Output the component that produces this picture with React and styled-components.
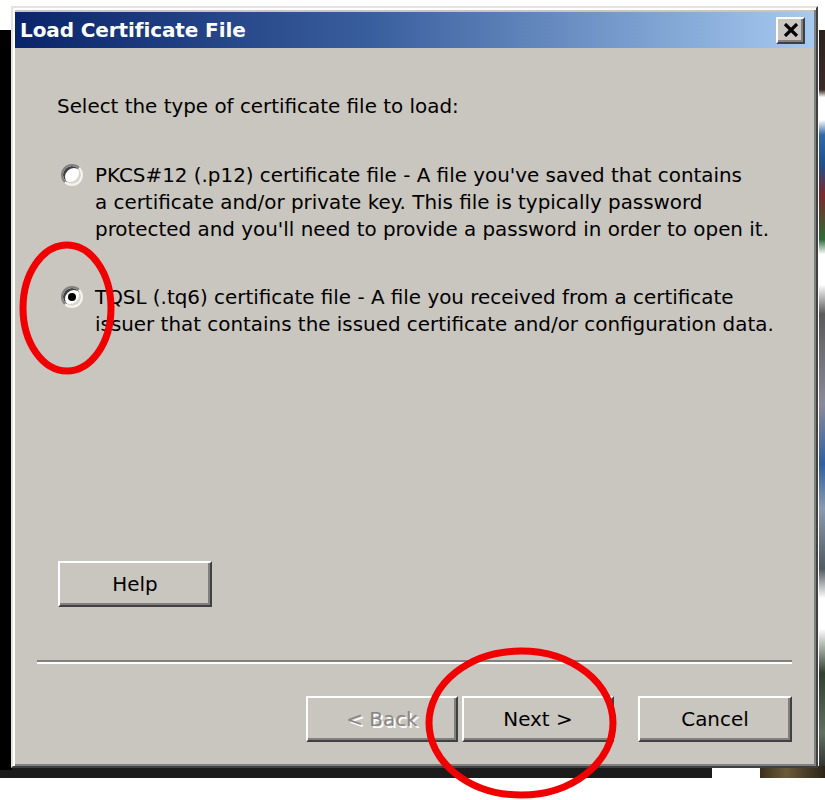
import React, { useState } from 'react'
import styled, { createGlobalStyle } from 'styled-components'

const GlobalStyle = createGlobalStyle`
  html, body { margin: 0; padding: 0; background: #fff; }
  body { font-family: "DejaVu Sans", "Liberation Sans", sans-serif; }
`

const options = [
  {
    id: 'p12',
    lines: [
      "PKCS#12 (.p12) certificate file - A file you've saved that contains",
      'a certificate and/or private key. This file is typically password',
      "protected and you'll need to provide a password in order to open it.",
    ],
  },
  {
    id: 'tq6',
    lines: [
      'TQSL (.tq6) certificate file - A file you received from a certificate',
      'issuer that contains the issued certificate and/or configuration data.',
    ],
  },
]

function App() {
  const [selected, setSelected] = useState('tq6')
  return (
    <Screen>
      <GlobalStyle />
      <Dialog>
        <TitleBar>
          <Title>Load Certificate File</Title>
          <CloseButton aria-label="Close">
            <svg width="16" height="14" viewBox="0 0 16 14">
              <path d="M2 1 L14 13 M14 1 L2 13" stroke="#000" strokeWidth="3.2" />
            </svg>
          </CloseButton>
        </TitleBar>
        <Body>
          <Prompt>Select the type of certificate file to load:</Prompt>
          {options.map((o, i) => (
            <Option key={o.id} first={i === 0} onClick={() => setSelected(o.id)}>
              <Radio checked={selected === o.id} />
              <OptionText>
                {o.lines.map((l) => (
                  <div key={l}>{l}</div>
                ))}
              </OptionText>
            </Option>
          ))}
          <HelpButton>Help</HelpButton>
          <Separator />
          <ButtonRow>
            <Button disabled>&lt; Back</Button>
            <Button>Next &gt;</Button>
            <Button wide>Cancel</Button>
          </ButtonRow>
        </Body>
      </Dialog>
      <Annotations width="825" height="800" viewBox="0 0 825 800">
        <ellipse cx="67" cy="308" rx="44" ry="63" fill="none" stroke="#f00000" strokeWidth="7" />
        <ellipse cx="521" cy="723" rx="92" ry="72" fill="none" stroke="#f00000" strokeWidth="7" />
      </Annotations>
    </Screen>
  )
}

export default App

const Screen = styled.div`
position: relative;
width: 825px;
height: 800px;
overflow: hidden;
padding-top: 6px;
box-sizing: border-box;
background:
  linear-gradient(#000, #000) 0 30px / 12px 740px no-repeat,
  linear-gradient(#1b1b1b, #1b1b1b) 0 766px / 712px 12px no-repeat,
  linear-gradient(90deg, #3a3020, #6b5a3a 40%, #2a2418) 760px 766px / 65px 12px no-repeat,
  linear-gradient(180deg, #2a2220 0%, #3b2a28 8%, #ffffff 9%, #ffffff 12%, #2f6aa8 14%, #1f4f8a 18%, #7a2a2a 22%, #2f6a3a 28%, #ffffff 30%, #ffffff 34%, #5a5a5a 38%, #8a8a9a 50%, #3060a0 58%, #8a9ab0 64%, #505a60 72%, #ffffff 76%, #ffffff 80%, #304030 86%, #607060 94%, #202020 100%) 819px 30px / 6px 748px no-repeat,
  #fff;
`

const Dialog = styled.div`
width: 807px;
height: 762px;
margin-left: 11px;
box-sizing: border-box;
background: #c9c5bf;
border: 2px solid;
border-color: #e6e3de #404040 #404040 #e6e3de;
box-shadow: inset 2px 2px 0 #fff, inset -2px -2px 0 #808080;
padding: 4px 2px 4px;
display: flex;
flex-direction: column;
`

const TitleBar = styled.div`
height: 36px;
flex-shrink: 0;
display: flex;
align-items: center;
justify-content: space-between;
padding: 0 9px 0 5px;
background: linear-gradient(90deg, #0a246a 0%, #3a5f9e 45%, #a6caf0 100%);
`

const Title = styled.div`
color: #fff;
font-weight: bold;
font-size: 20px;
letter-spacing: -0.1px;
`

const CloseButton = styled.div`
width: 29px;
height: 27px;
box-sizing: border-box;
background: #c9c5bf;
border: 2px solid;
border-color: #fff #404040 #404040 #fff;
box-shadow: inset -2px -2px 0 #808080;
display: flex;
align-items: center;
justify-content: center;
`

const Body = styled.div`
flex: 1;
display: flex;
flex-direction: column;
padding: 0 22px 20px;
color: #000;
font-size: 19.9px;
line-height: 27px;
`

const Prompt = styled.div`
margin: 45px 0 0 20px;
`

const Option = styled.div`
display: flex;
align-items: flex-start;
margin: ${(p) => (p.first ? '42px' : '41px')} 0 0 24px;
cursor: default;
`

const Radio = styled.span`
position: relative;
flex-shrink: 0;
width: 22px;
height: 22px;
margin-top: 2px;
margin-right: 12px;
box-sizing: border-box;
border-radius: 50%;
background: #fff;
border: 2px solid;
border-color: #808080 #f4f2ee #f4f2ee #808080;
box-shadow: inset 2px 2px 0 #404040, inset -2px -2px 0 #d8d4ce;
&::after {
  content: '';
  display: ${(p) => (p.checked ? 'block' : 'none')};
  position: absolute;
  left: 5px;
  top: 5px;
  width: 8px;
  height: 8px;
  border-radius: 50%;
  background: #000;
}
`

const OptionText = styled.div`
white-space: nowrap;
`

const Button = styled.button`
width: ${(p) => (p.wide ? '154px' : '152px')};
height: 46px;
box-sizing: border-box;
margin-left: ${(p) => (p.wide ? '20px' : '0')};
background: #c9c5bf;
border: 2px solid;
border-color: #fff #404040 #404040 #fff;
box-shadow: inset -2px -2px 0 #808080;
font-family: "DejaVu Sans", "Liberation Sans", sans-serif;
font-size: 19.9px;
color: ${(p) => (p.disabled ? '#8a8782' : '#000')};
text-shadow: ${(p) => (p.disabled ? '2px 2px 0 #fff' : 'none')};
padding: 0;
`

const HelpButton = styled(Button)`
width: 154px;
margin-top: auto;
margin-left: 21px;
`

const Separator = styled.div`
margin-top: 53px;
height: 2px;
background: #808080;
border-bottom: 2px solid #fff;
`

const ButtonRow = styled.div`
display: flex;
justify-content: flex-end;
gap: 4px;
margin-top: 32px;
`

const Annotations = styled.svg`
position: absolute;
left: 0;
top: 0;
pointer-events: none;
`
